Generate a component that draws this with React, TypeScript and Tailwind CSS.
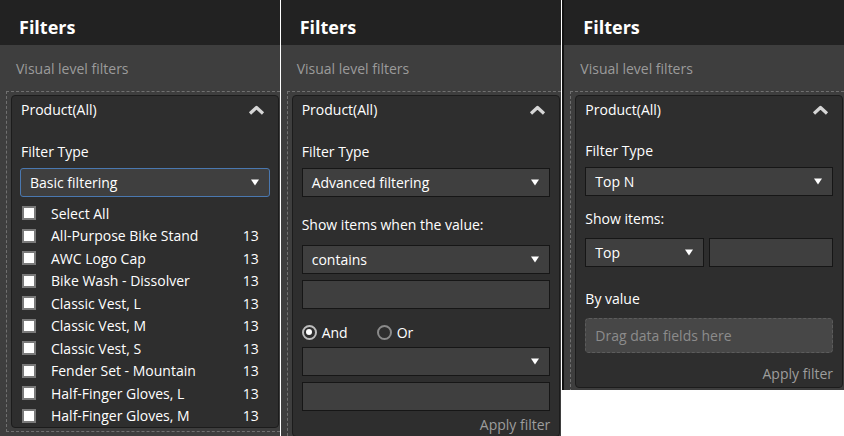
import React from 'react';

const Caret = () => (
  <svg width="8" height="7" viewBox="0 0 8 7" className="shrink-0">
    <path d="M0 0.5H8L4 6.5Z" fill="#ffffff" />
  </svg>
);

const Chevron = () => (
  <svg width="17" height="10" viewBox="0 0 17 10" className="shrink-0">
    <path d="M2 8.5L8.5 2.5L15 8.5" stroke="#d6d6d6" strokeWidth="3.2" strokeLinejoin="round" fill="none" />
  </svg>
);

interface SelectProps {
  value?: string;
  focused?: boolean;
  className?: string;
}

const Select: React.FC<SelectProps> = ({ value = '', focused = false, className = '' }) => (
  <div
    className={`h-[29px] flex items-center justify-between pl-[9px] pr-[10px] bg-[#3f3f3f] text-[14px] text-white ${
      focused ? 'border border-[#4a78b0] rounded-[3px]' : 'border border-[#161616]'
    } ${className}`}
  >
    <span>{value}</span>
    <Caret />
  </div>
);

const Input: React.FC<{ className?: string }> = ({ className = '' }) => (
  <div className={`h-[29px] bg-[#3f3f3f] border border-[#161616] ${className}`} />
);

const Label: React.FC<{ children: React.ReactNode; className?: string }> = ({ children, className = '' }) => (
  <div className={`text-[14px] leading-[22px] text-white ${className}`}>{children}</div>
);

const ApplyFilter: React.FC<{ className?: string }> = ({ className = '' }) => (
  <div className={`text-right text-[14px] leading-[22px] text-[#9d9d9d] ${className}`}>Apply filter</div>
);

interface PanelProps {
  children: React.ReactNode;
  className?: string;
}

const Panel: React.FC<PanelProps> = ({ children, className = '' }) => (
  <div className={`flex flex-col bg-[#3e3e3e] overflow-hidden ${className}`}>
    <div className="h-[45px] shrink-0 bg-[#222222] pl-[19px] pt-[9px] flex items-center text-[18px] font-bold text-white">
      Filters
    </div>
    <div className="h-[46px] shrink-0 pl-[16px] pt-[13px] text-[14px] leading-[22px] text-[#9b9b9b]">
      Visual level filters
    </div>
    <div className="ml-[6px] pl-[4px] pr-[1px] py-[3px] border-l border-t border-b border-dashed border-[#707070]">
      <div className="rounded-[4px] border border-[#1c1c1c] bg-[#2e2e2e] px-[9px]">
        <div className="h-[27px] flex items-center justify-between pr-[4px] text-[14px] text-white">
          <span>Product(All)</span>
          <Chevron />
        </div>
        {children}
      </div>
    </div>
  </div>
);

const products = [
  'All-Purpose Bike Stand',
  'AWC Logo Cap',
  'Bike Wash - Dissolver',
  'Classic Vest, L',
  'Classic Vest, M',
  'Classic Vest, S',
  'Fender Set - Mountain',
  'Half-Finger Gloves, L',
  'Half-Finger Gloves, M',
];

const CheckRow: React.FC<{ label: string; count?: string }> = ({ label, count }) => (
  <div className="h-[22.5px] flex items-center text-[14px] text-white">
    <div className="w-[14px] h-[14px] ml-[1px] bg-white border-2 border-[#7a7a7a] shrink-0" />
    <span className="ml-[15px] flex-1">{label}</span>
    {count && <span className="pr-[10px]">{count}</span>}
  </div>
);

const Radio: React.FC<{ checked?: boolean; label: string; className?: string }> = ({ checked, label, className = '' }) => (
  <div className={`flex items-center ${className}`}>
    <div
      className={`w-[15px] h-[15px] rounded-full border-2 flex items-center justify-center ${
        checked ? 'border-[#bdbdbd]' : 'border-[#8a8a8a]'
      }`}
    >
      {checked && <div className="w-[6px] h-[6px] rounded-full bg-white" />}
    </div>
    <span className="ml-[5px] text-[14px] text-white">{label}</span>
  </div>
);

export default function App() {
  return (
    <div className="w-[844px] h-[436px] bg-white flex items-start gap-px font-['Open_Sans',sans-serif] overflow-hidden">
      {/* Basic filtering */}
      <Panel className="w-[280px] h-[436px]">
        <Label className="mt-[18px]">Filter Type</Label>
        <Select value="Basic filtering" focused className="mt-[5px] -mx-px" />
        <div className="mt-[5px]">
          <CheckRow label="Select All" />
          {products.map((p) => (
            <CheckRow key={p} label={p} count="13" />
          ))}
        </div>
      </Panel>

      {/* Advanced filtering */}
      <Panel className="w-[281px] h-[436px]">
        <Label className="mt-[18px]">Filter Type</Label>
        <Select value="Advanced filtering" className="mt-[5px]" />
        <Label className="mt-[17px]">Show items when the value:</Label>
        <Select value="contains" className="mt-[9px]" />
        <Input className="mt-[6px]" />
        <div className="mt-[12px] h-[22px] flex items-center">
          <Radio checked label="And" />
          <Radio label="Or" className="ml-[29px]" />
        </div>
        <Select className="mt-[4px]" />
        <Input className="mt-[6px]" />
        <ApplyFilter className="mt-[3px]" />
      </Panel>

      {/* Top N */}
      <Panel className="w-[282px] h-[390px] border-l-2 border-[#111111]">
        <Label className="mt-[17px]">Filter Type</Label>
        <Select value="Top N" className="mt-[5px]" />
        <Label className="mt-[12px]">Show items:</Label>
        <div className="mt-[8px] flex gap-[5px]">
          <Select value="Top" className="w-[119px]" />
          <Input className="flex-1" />
        </div>
        <Label className="mt-[21px]">By value</Label>
        <div className="mt-[8px] h-[35px] rounded-[4px] border border-dashed border-[#5c5c5c] bg-[#474747] flex items-center pl-[9px] text-[14px] text-[#8c8c8c]">
          Drag data fields here
        </div>
        <ApplyFilter className="mt-[10px] pb-[2px]" />
      </Panel>
    </div>
  );
}
